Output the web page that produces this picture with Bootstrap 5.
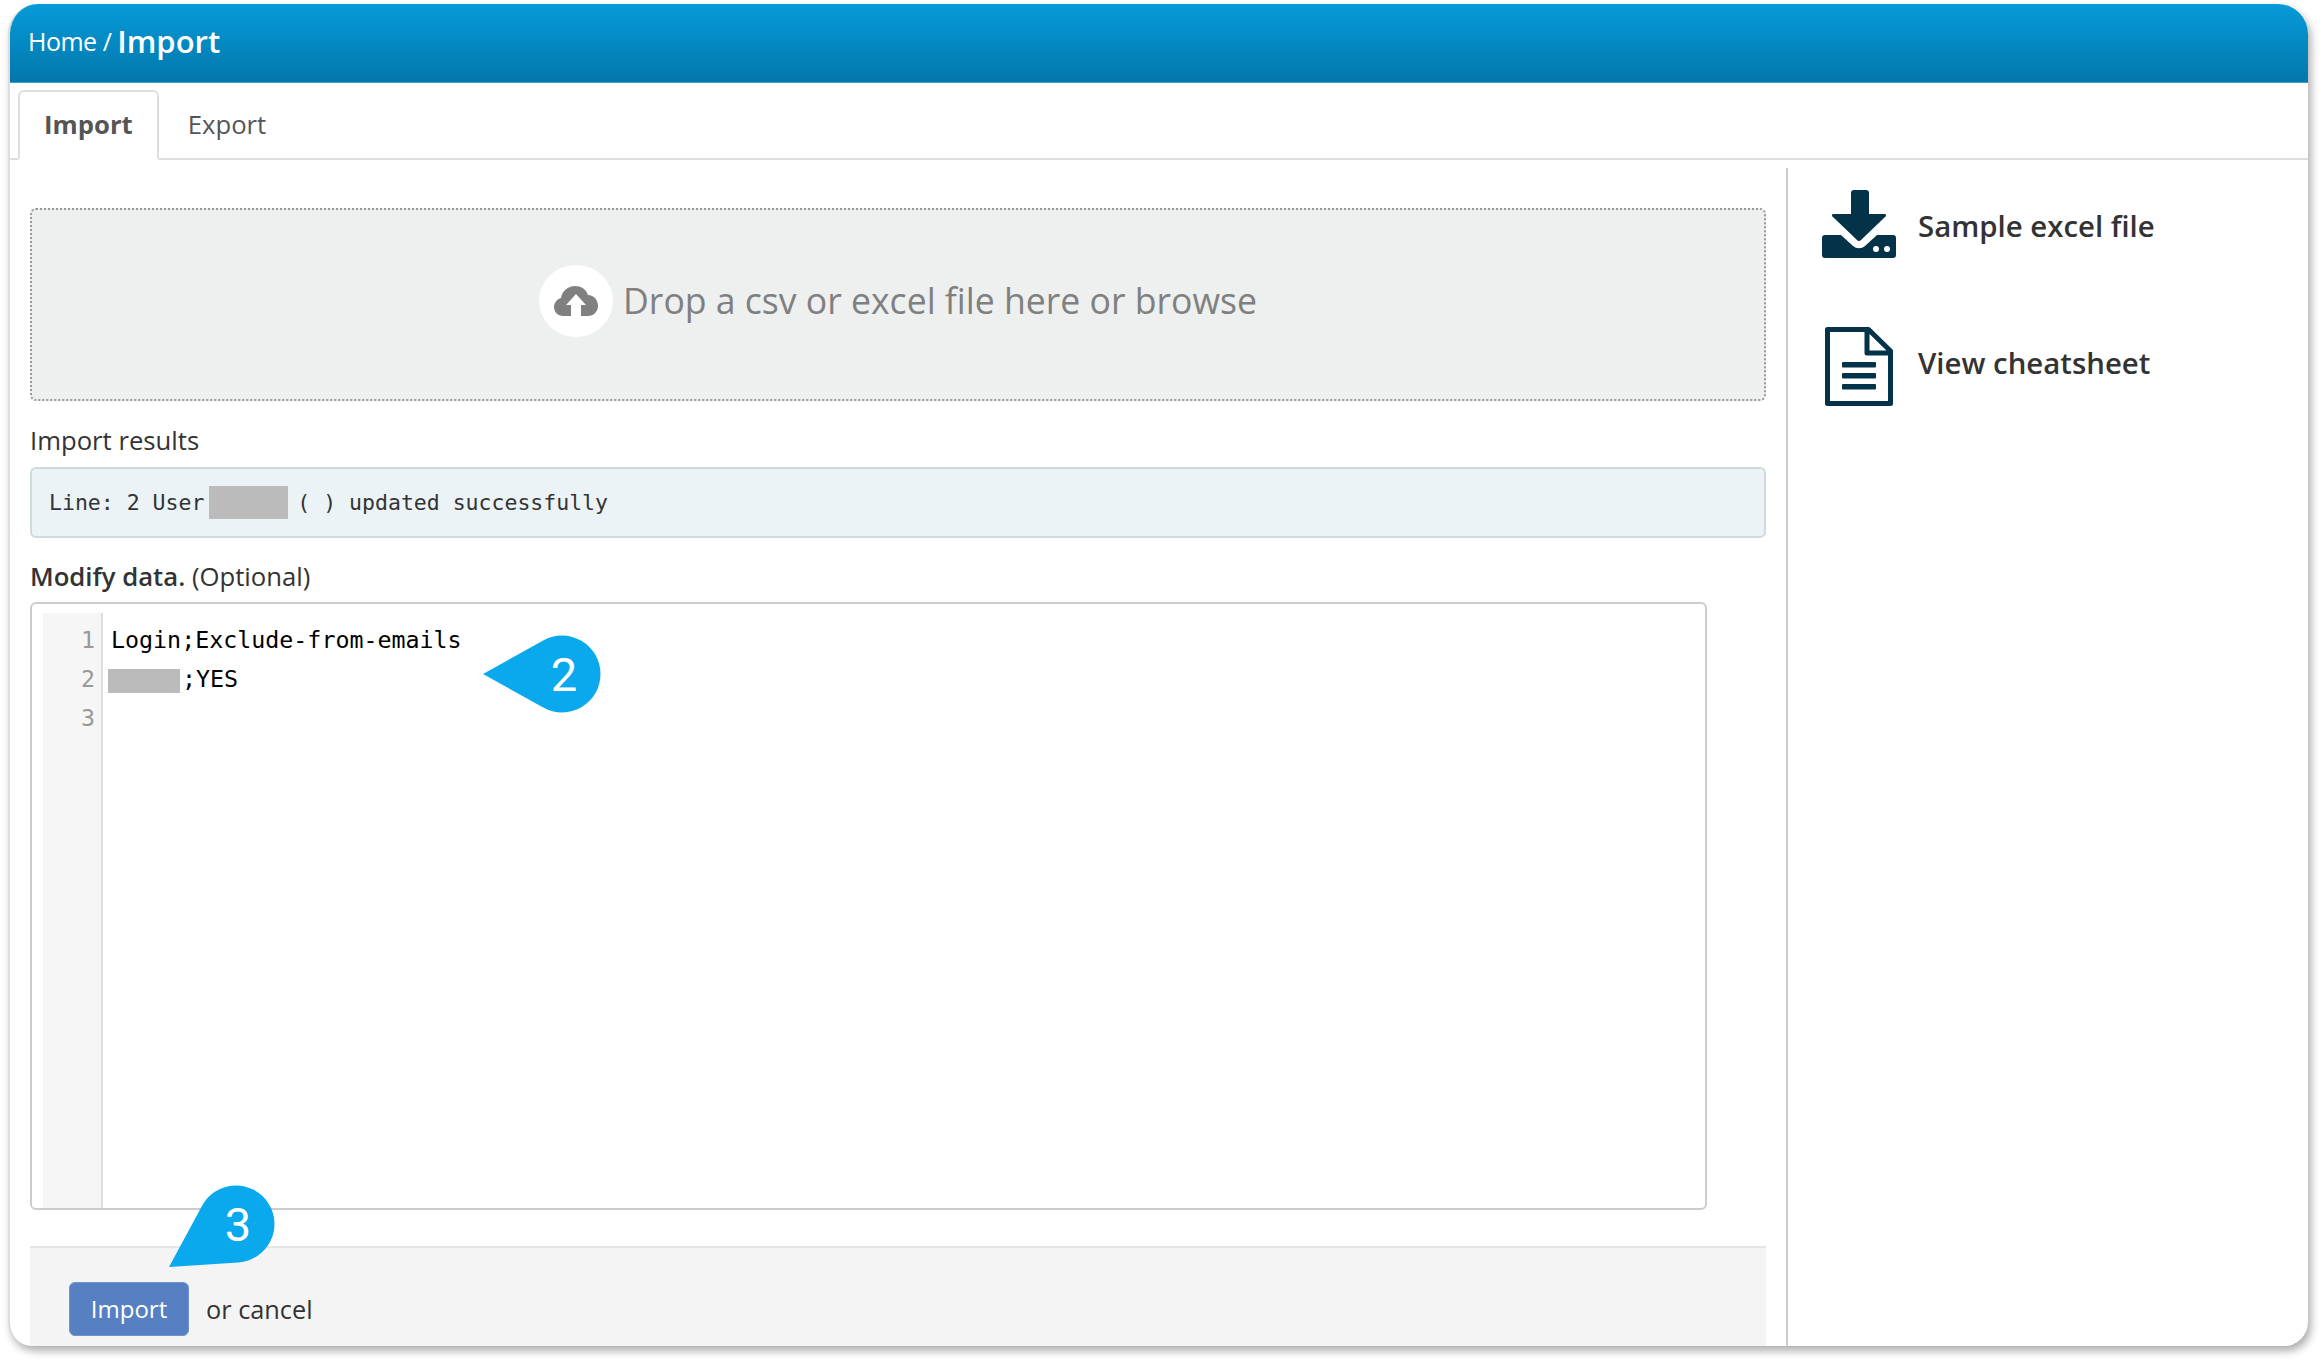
<!DOCTYPE html>
<html lang="en">
<head>
<meta charset="utf-8">
<title>Import</title>
<link href="https://cdn.jsdelivr.net/npm/bootstrap@5.3.0/dist/css/bootstrap.min.css" rel="stylesheet">
<style>
html,body{height:100%;background:#fff;}
body{font-family:"Open Sans","Liberation Sans",sans-serif;color:#333;font-size:25.3px;overflow:hidden;}
.app-window{position:relative;width:2300px;height:1342px;margin:4px 0 0 8px;background:#fff;border-radius:30px 30px 24px 24px;box-shadow:3px 5px 9px rgba(0,0,0,.32);border-left:2px solid #ddd;overflow:hidden;}
.callouts{position:absolute;left:-10px;top:-4px;width:2324px;height:1366px;pointer-events:none;}
.app-head{height:79px;margin-left:-2px;padding:0 0 4px 20px;background:linear-gradient(#069bd9,#0277ab);border-bottom:1px solid #3a9fcb;color:#fff;font-size:25px;letter-spacing:-.5px;line-height:1;}
.app-head b{font-size:31px;font-weight:600;letter-spacing:0;}
.tab-wrap{padding:7px 0 0 8px;}
.tab-wrap .nav-tabs{border-bottom:2px solid #ddd;margin-left:-8px;padding-left:8px;--bs-nav-tabs-border-width:2px;}
.tab-wrap .nav-link{font-size:25.7px;color:#555;height:70px;padding:16px 24px 0 24px;line-height:34px;border-radius:6px 6px 0 0;border:2px solid transparent;margin-bottom:-2px;}
.tab-wrap .nav-link.active{color:#555;font-weight:700;border-color:#ddd #ddd #fff;}
.tab-wrap .nav-item+.nav-item .nav-link{padding-left:27px;}
.pane-main{width:1778px;padding:48px 22px 0 20px;flex:none;position:relative;}
.pane-rule{position:absolute;right:0;top:8px;bottom:0;width:2px;background:#ccc;}
.drop-zone{height:193px;background:#eeefef;border:2px dotted #999;border-radius:6px;color:#808080;font-size:35.6px;padding-bottom:8px;}
.drop-disc{width:74px;height:72px;border-radius:50%;background:#fff;margin-right:10px;}
.field-label{font-size:25.7px;line-height:34px;margin:23px 0 9px;}
.field-label.second{margin:22px 0 8px;}
.semi{font-weight:600;}
.result-box{height:71px;background:#ebf3f6;border:2px solid #cfdadd;border-radius:6px;padding:2px 0 0 17px;font-family:"DejaVu Sans Mono",monospace;font-size:21.5px;color:#333;}
.hide-bar{display:inline-block;background:#bbb;}
.hide-a{width:79px;height:33px;margin:0 9px 2px 5px;}
.hide-b{width:72px;height:24px;margin:0 2px 0 5px;vertical-align:middle;}
.editor-box{width:1677px;height:608px;border:2px solid #ccc;border-radius:6px;padding:9px 0 0 11px;font-family:"DejaVu Sans Mono",monospace;font-size:23.3px;line-height:39px;color:#000;}
.editor-gutter{width:60px;background:#f6f6f6;border-right:2px solid #ddd;color:#999;text-align:right;padding:7px 6px 0 0;}
.editor-lines{padding:7px 0 0 0;}
.editor-lines .ln{padding-left:8px;white-space:pre;height:39px;}
.editor-lines .ln.flush{padding-left:0;}
.form-foot{margin-top:36px;background:#f4f4f4;border-top:2px solid #e5e5e5;padding:34px 0 0 39px;}
.btn-go{width:120px;height:54px;background:#5680c2;border:1px solid #6f93cb;color:#fff;font-size:24px;border-radius:6px;padding:0;}
.btn-go:hover{background:#5680c2;color:#fff;}
.or-text{margin:9px 0 0 17px;}
.side-item{font-size:29.4px;font-weight:600;color:#333;}
.side-pane{padding:30px 0 0 34px;}
.side-row-a{height:68px;}
.side-row-b{height:79px;margin-top:69px;}
.side-row-a span{margin-top:4px;}
.side-row-b span{margin-bottom:6px;}
.side-ico{margin-right:22px;flex:none;}
.ico-file{margin:0 25px 0 3px;}
.ink{fill:#033249;}
.bubble{fill:#0aa9ee;}
.bubble-num{font-family:Roboto,sans-serif;font-size:47px;fill:#fff;text-anchor:middle;}
</style>
</head>
<body>
<div class="app-window d-flex flex-column">
  <div class="app-head d-flex align-items-center">
    <span>Home /&nbsp;</span><b>Import</b>
  </div>
  <div class="tab-wrap">
    <ul class="nav nav-tabs">
      <li class="nav-item"><a class="nav-link active" href="#">Import</a></li>
      <li class="nav-item"><a class="nav-link" href="#">Export</a></li>
    </ul>
  </div>
  <div class="d-flex flex-grow-1">
    <div class="pane-main d-flex flex-column">
      <div class="pane-rule"></div>
      <div class="drop-zone d-flex align-items-center justify-content-center">
        <span class="drop-disc d-flex align-items-center justify-content-center">
          <svg width="44" height="30" viewBox="0 0 44 30"><path fill="#808080" d="M9 30C4 30 0 26 0 21c0-4 3-8 7-9C8 5 14 0 21 0c6 0 11 3 13 9 6 0 10 5 10 11 0 5-4 10-10 10h-7V19h5l-10-11-10 11h5v11z"/></svg>
        </span>
        <span>Drop a csv or excel file here or browse</span>
      </div>
      <div class="field-label">Import results</div>
      <div class="result-box d-flex align-items-center">
        <span>Line: 2 User</span><span class="hide-bar hide-a"></span><span>( ) updated successfully</span>
      </div>
      <div class="field-label second"><span class="semi">Modify data.</span> (Optional)</div>
      <div class="editor-box d-flex">
        <div class="editor-gutter"><div>1</div><div>2</div><div>3</div></div>
        <div class="editor-lines">
          <div class="ln">Login;Exclude-from-emails</div>
          <div class="ln flush"><span class="hide-bar hide-b"></span><span>;YES</span></div>
          <div class="ln"></div>
        </div>
      </div>
      <div class="form-foot flex-grow-1 d-flex align-items-start">
        <button type="button" class="btn btn-go">Import</button>
        <span class="or-text">or cancel</span>
      </div>
    </div>
    <div class="side-pane flex-grow-1">
      <div class="side-item side-row-a d-flex align-items-center">
        <svg class="side-ico" width="74" height="68" viewBox="0 0 74 68">
          <path class="ink" d="M32 0h12a3 3 0 0 1 3 3v21h15a1.500 1.500 0 0 1 1 3L39 50a3 3 0 0 1-4 0L11 27a1.500 1.500 0 0 1 1-3h17V3a3 3 0 0 1 3-3z"/>
          <path class="ink" d="M3 45h16l12 11a9 9 0 0 0 12 0l12-11h16a3 3 0 0 1 3 3v17a3 3 0 0 1-3 3H3a3 3 0 0 1-3-3V48a3 3 0 0 1 3-3z"/>
          <circle cx="54" cy="59" r="3" fill="#fff"/><circle cx="65" cy="59" r="3" fill="#fff"/>
        </svg>
        <span>Sample excel file</span>
      </div>
      <div class="side-item side-row-b d-flex align-items-center">
        <svg class="side-ico ico-file" width="68" height="79" viewBox="0 0 68 79">
          <path fill="none" stroke="#033249" stroke-width="5" stroke-linejoin="round" d="M2.500 2.500h41L65.500 24v52.500h-63zM42 2.500V26h23.500"/>
          <rect class="ink" x="17" y="35" width="34" height="5.500" rx="1"/><rect class="ink" x="17" y="46" width="34" height="5.500" rx="1"/><rect class="ink" x="17" y="57" width="34" height="5.500" rx="1"/>
        </svg>
        <span>View cheatsheet</span>
      </div>
    </div>
  </div>
  <svg class="callouts" viewBox="0 0 2324 1366">
    <path class="bubble" d="M483 674L543.200 640.400A38.500 38.500 0 1 1 543.200 707.600Z"/>
    <text class="bubble-num" x="564" y="691">2</text>
    <path class="bubble" d="M169 1267L202.100 1205.700A38.500 38.500 0 1 1 238.500 1262.400Z"/>
    <text class="bubble-num" x="238" y="1241">3</text>
  </svg>
</div>
<script src="https://cdn.jsdelivr.net/npm/bootstrap@5.3.0/dist/js/bootstrap.bundle.min.js"></script>
</body>
</html>
